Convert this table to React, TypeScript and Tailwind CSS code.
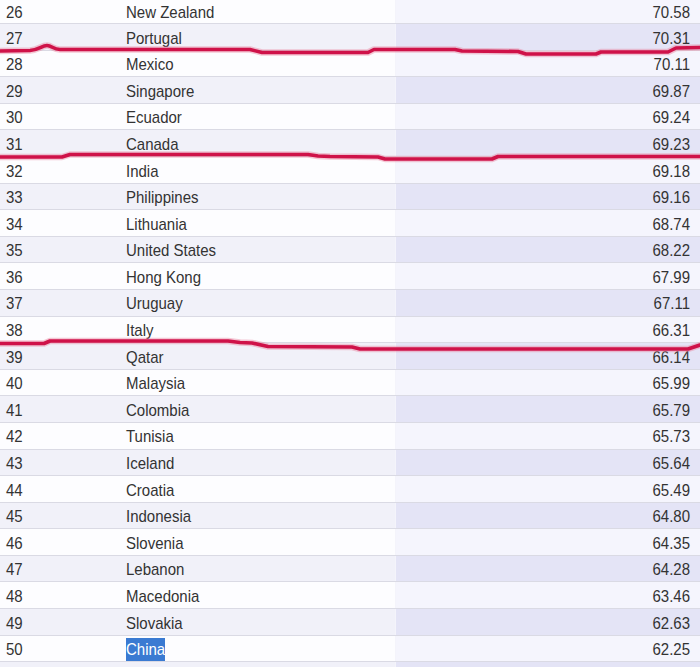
import React from 'react';

type Row = { rank: number; country: string; score: string };

const rows: Row[] = [
    { rank: 26, country: 'New Zealand', score: '70.58' },
    { rank: 27, country: 'Portugal', score: '70.31' },
    { rank: 28, country: 'Mexico', score: '70.11' },
    { rank: 29, country: 'Singapore', score: '69.87' },
    { rank: 30, country: 'Ecuador', score: '69.24' },
    { rank: 31, country: 'Canada', score: '69.23' },
    { rank: 32, country: 'India', score: '69.18' },
    { rank: 33, country: 'Philippines', score: '69.16' },
    { rank: 34, country: 'Lithuania', score: '68.74' },
    { rank: 35, country: 'United States', score: '68.22' },
    { rank: 36, country: 'Hong Kong', score: '67.99' },
    { rank: 37, country: 'Uruguay', score: '67.11' },
    { rank: 38, country: 'Italy', score: '66.31' },
    { rank: 39, country: 'Qatar', score: '66.14' },
    { rank: 40, country: 'Malaysia', score: '65.99' },
    { rank: 41, country: 'Colombia', score: '65.79' },
    { rank: 42, country: 'Tunisia', score: '65.73' },
    { rank: 43, country: 'Iceland', score: '65.64' },
    { rank: 44, country: 'Croatia', score: '65.49' },
    { rank: 45, country: 'Indonesia', score: '64.80' },
    { rank: 46, country: 'Slovenia', score: '64.35' },
    { rank: 47, country: 'Lebanon', score: '64.28' },
    { rank: 48, country: 'Macedonia', score: '63.46' },
    { rank: 49, country: 'Slovakia', score: '62.63' },
    { rank: 50, country: 'China', score: '62.25' },
    { rank: 51, country: '', score: '' },
];

// hand-drawn marker strokes over the table
const strokes = [
    'M0 51 L30 50.5 C38 50 42 45.5 47 45.5 C52 45.5 53 49.5 60 49.5 L250 49.5 L262 52.5 L368 52.5 L374 49.5 L455 49.5 L462 51 L518 51.5 L526 54 L596 54 L601 52 L668 52 L676 48 L700 47.5',
    'M0 157 L62 157 L70 154.5 L308 154.5 L318 156 L330 156.5 L378 157 L385 159 L492 159 L498 156.5 L700 156.5',
    'M0 343.5 L44 343.5 L50 341 L228 341 L240 342.5 L252 343 L268 346.5 L352 347 L360 349 L688 349 L700 345',
];

function Cell({ children }: { children: React.ReactNode }) {
    return <span className="inline-block translate-y-px scale-y-[1.12]">{children}</span>;
}

export default function App() {
    return (
        <div
            className="relative h-[667px] w-[700px] overflow-hidden bg-white text-[15px] text-[#333]"
            style={{ fontFamily: '"Liberation Sans", Arial, sans-serif' }}
        >
            <div className="flex flex-col">
                {rows.map((row, i) => {
                    const odd = row.rank % 2 === 1;
                    return (
                        <div
                            key={row.rank}
                            className={`grid shrink-0 grid-cols-[120px_275px_1fr] border-b border-[#dadae4] ${
                                i === 0 ? 'h-[24px]' : 'h-[26.6px]'
                            }`}
                        >
                            <div
                                className={`flex items-center pl-[6px] ${
                                    odd ? 'bg-[#f1f1f9]' : 'bg-[#fdfdff]'
                                }`}
                            >
                                <Cell>{row.rank < 51 ? row.rank : ''}</Cell>
                            </div>
                            <div
                                className={`flex items-center pl-[6px] ${
                                    odd ? 'bg-[#f1f1f9]' : 'bg-[#fdfdff]'
                                }`}
                            >
                                {row.country === 'China' ? (
                                    <span className="inline-block translate-y-px bg-[#3a7ad2] text-white">
                                        <span className="inline-block scale-y-[1.12]">{row.country}</span>
                                    </span>
                                ) : (
                                    <Cell>{row.country}</Cell>
                                )}
                            </div>
                            <div
                                className={`flex items-center justify-end border-l border-[#f4f4fb] pr-[10px] ${
                                    odd ? 'bg-[#e4e4f6]' : 'bg-[#f5f5fd]'
                                }`}
                            >
                                <Cell>{row.score}</Cell>
                            </div>
                        </div>
                    );
                })}
            </div>

            <svg
                className="pointer-events-none absolute left-0 top-0"
                width="700"
                height="667"
                viewBox="0 0 700 667"
            >
                {strokes.map((d, i) => (
                    <g key={i} fill="none" strokeLinecap="round" strokeLinejoin="round">
                        <path d={d} stroke="#e8869f" strokeWidth="6.5" opacity="0.45" />
                        <path d={d} stroke="#cf1249" strokeWidth="3.6" />
                    </g>
                ))}
            </svg>
        </div>
    );
}
